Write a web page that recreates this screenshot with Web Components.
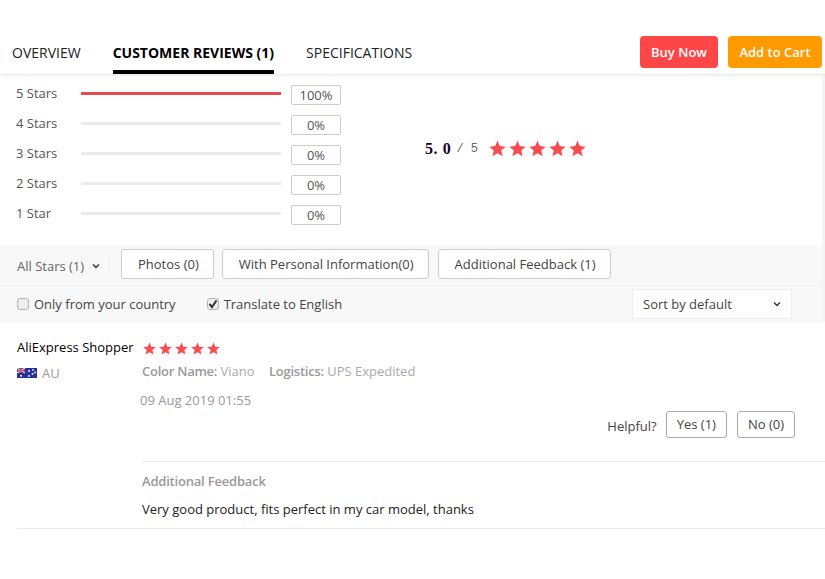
<!DOCTYPE html>
<html>
<head>
<meta charset="utf-8">
<style>
  html, body {
    margin: 0;
    background: #fff;
    font-family: "Open Sans", sans-serif;
    font-size: 13px;
    color: #333;
  }
</style>
</head>
<body>
<top-bar></top-bar>
<rating-summary></rating-summary>
<filter-bar></filter-bar>
<review-item
  name="AliExpress Shopper"
  country="AU"
  color="Viano"
  logistics="UPS Expedited"
  date="09 Aug 2019 01:55"
  yes="1"
  no="0">Very good product, fits perfect in my car model, thanks</review-item>

<script>
class StarRow extends HTMLElement {
  constructor() {
    super();
    this.shadowDOM = this.attachShadow({mode: 'open'});
  }

  connectedCallback() {
    const size = this.getAttribute('size') || 16;
    const gap = this.getAttribute('gap') || 4;
    const star = `<svg width="${size}" height="${size}" viewBox="0 0 24 24"><path fill="#f94c50" d="M12 1l3.3 7.6 8.2.8-6.2 5.4 1.9 8.1L12 18.7l-7.2 4.2 1.9-8.1L.5 9.4l8.2-.8z"/></svg>`;
    this.shadowDOM.innerHTML = `
      <style>
        :host {
          display: inline-flex;
          gap: ${gap}px;
        }
        svg {
          display: block;
        }
      </style>
      ${star.repeat(5)}
    `;
  }
}

class TopBar extends HTMLElement {
  constructor() {
    super();
    this.shadowDOM = this.attachShadow({mode: 'open'});
    this.shadowDOM.innerHTML = `
      <style>
        :host {
          display: flex;
          position: relative;
          z-index: 1;
          height: 74px;
          padding-left: 12px;
          padding-right: 3px;
          box-sizing: border-box;
          background: #fff;
          box-shadow: 0 1px 3px rgba(0, 0, 0, 0.12);
          font-size: 14px;
          color: #222;
        }
        .tab {
          height: 74px;
          box-sizing: border-box;
          padding-top: 43px;
          line-height: 20px;
          margin-right: 32px;
        }
        .active {
          font-weight: 700;
          color: #000;
          border-bottom: 4px solid #000;
        }
        .actions {
          margin-left: auto;
          display: flex;
          gap: 10px;
          padding-top: 36px;
        }
        .btn {
          height: 32px;
          line-height: 32px;
          box-sizing: border-box;
          text-align: center;
          border-radius: 4px;
          color: #fff;
          font-weight: 600;
          font-size: 13px;
        }
        .buy { background: #ff4747; width: 78px; }
        .cart { background: #ff9a00; width: 94px; }
      </style>
      <div class="tab">OVERVIEW</div>
      <div class="tab active">CUSTOMER REVIEWS (1)</div>
      <div class="tab">SPECIFICATIONS</div>
      <div class="actions">
        <div class="btn buy">Buy Now</div>
        <div class="btn cart">Add to Cart</div>
      </div>
    `;
  }
}

class RatingRow extends HTMLElement {
  constructor() {
    super();
    this.shadowDOM = this.attachShadow({mode: 'open'});
  }

  connectedCallback() {
    const value = this.getAttribute('value');
    this.shadowDOM.innerHTML = `
      <style>
        :host {
          display: flex;
          align-items: center;
          height: 30px;
          color: #555;
        }
        .label {
          width: 65px;
          position: relative;
          top: -2px;
        }
        .track {
          width: 200px;
          height: 3px;
          position: relative;
          top: -2px;
          background: #ebebeb;
        }
        .fill {
          height: 100%;
          width: ${value};
          background: #e8494c;
        }
        .pct {
          box-sizing: border-box;
          width: 50px;
          height: 20px;
          margin-left: 10px;
          text-align: center;
          border: 1px solid #ccc;
          border-radius: 2px;
          line-height: 19px;
        }
      </style>
      <div class="label"><slot></slot></div>
      <div class="track"><div class="fill"></div></div>
      <div class="pct">${value}</div>
    `;
  }
}

class RatingSummary extends HTMLElement {
  constructor() {
    super();
    this.shadowDOM = this.attachShadow({mode: 'open'});
    this.shadowDOM.innerHTML = `
      <style>
        :host {
          display: flex;
          height: 172px;
          box-sizing: border-box;
          padding: 6px 0 0 16px;
          border-right: 3px solid #f5f5f5;
        }
        .rows {
          width: 341px;
        }
        .score {
          display: flex;
          align-items: center;
          height: 137px;
          margin-left: 68px;
        }
        b {
          font-family: "Liberation Serif", serif;
          font-size: 16px;
          color: #14052a;
          letter-spacing: 0.6px;
          white-space: pre;
        }
        span {
          font-family: "Liberation Mono", monospace;
          font-size: 12px;
          color: #666;
          margin-left: 5px;
          margin-right: 11px;
        }
      </style>
      <div class="rows">
        <rating-row value="100%">5 Stars</rating-row>
        <rating-row value="0%">4 Stars</rating-row>
        <rating-row value="0%">3 Stars</rating-row>
        <rating-row value="0%">2 Stars</rating-row>
        <rating-row value="0%">1 Star</rating-row>
      </div>
      <div class="score">
        <b>5. 0</b><span>/ 5</span>
        <star-row size="17" gap="3"></star-row>
      </div>
    `;
  }
}

class FilterBar extends HTMLElement {
  constructor() {
    super();
    this.shadowDOM = this.attachShadow({mode: 'open'});
    this.shadowDOM.innerHTML = `
      <style>
        :host {
          display: block;
          background: #f8f8f8;
          color: #444;
          border-right: 3px solid #f5f5f5;
        }
        .line {
          display: flex;
          align-items: center;
        }
        .first {
          height: 37px;
          padding-left: 17px;
          box-sizing: border-box;
          padding-top: 3px;
          padding-bottom: 4px;
        }
        .second {
          height: 39px;
          padding-left: 17px;
          padding-top: 2px;
          border-top: 1px solid #fcfcfc;
          box-sizing: border-box;
        }
        .all {
          width: 93px;
          height: 30px;
          margin-right: 11px;
          display: flex;
          align-items: center;
          gap: 8px;
          padding-top: 4px;
          box-sizing: border-box;
          color: #666;
          border-right: 1px solid #eee;
        }
        .chip {
          box-sizing: border-box;
          height: 30px;
          line-height: 28px;
          padding: 0 14px 0 16px;
          margin-right: 9px;
          background: #fff;
          border: 1px solid #ccc;
          border-radius: 3px;
        }
        .check {
          display: flex;
          align-items: center;
          gap: 5px;
        }
        .box {
          box-sizing: border-box;
          width: 12px;
          height: 12px;
          background: #eee;
          border: 1px solid #b4b4b4;
          border-radius: 3px;
          display: flex;
          align-items: center;
          justify-content: center;
        }
        .sort {
          box-sizing: border-box;
          width: 160px;
          height: 30px;
          margin-left: auto;
          margin-right: 30px;
          padding: 0 10px 0 10px;
          display: flex;
          align-items: center;
          justify-content: space-between;
          background: #fff;
          border: 1px solid #eee;
        }
        svg {
          display: block;
        }
      </style>
      <div class="line first">
        <div class="all">All Stars (1)
          <svg width="8" height="6" viewBox="0 0 8 6"><path d="M1 1.5l3 3 3-3" fill="none" stroke="#333" stroke-width="1.4"/></svg>
        </div>
        <div class="chip" style="margin-right:8px">Photos (0)</div>
        <div class="chip">With Personal Information(0)</div>
        <div class="chip">Additional Feedback (1)</div>
      </div>
      <div class="line second">
        <div class="check" style="margin-right:31px"><span class="box"></span>Only from your country</div>
        <div class="check"><span class="box"><svg width="10" height="10" viewBox="0 0 10 10"><path d="M1.5 5l2.5 3 4.5-6.5" fill="none" stroke="#333" stroke-width="2"/></svg></span>Translate to English</div>
        <div class="sort">Sort by default
          <svg width="8" height="6" viewBox="0 0 8 6"><path d="M1 1.5l3 3 3-3" fill="none" stroke="#333" stroke-width="1.4"/></svg>
        </div>
      </div>
    `;
  }
}

class ReviewItem extends HTMLElement {
  constructor() {
    super();
    this.shadowDOM = this.attachShadow({mode: 'open'});
  }

  connectedCallback() {
    const attr = name => this.getAttribute(name);
    this.shadowDOM.innerHTML = `
      <style>
        :host {
          display: grid;
          grid-template-columns: 125px 1fr;
          margin-left: 17px;
          height: 207px;
          box-sizing: border-box;
          border-bottom: 1px solid #e8e8e8;
        }
        .user {
          padding-top: 15px;
        }
        .name {
          line-height: 20px;
          color: #000;
          white-space: nowrap;
        }
        .place {
          display: flex;
          align-items: center;
          gap: 5px;
          margin-top: 7px;
          line-height: 18px;
          color: #999;
        }
        .main {
          padding-top: 18px;
        }
        .rate {
          height: 16px;
          margin-left: 1px;
          display: flex;
          align-items: center;
        }
        .meta {
          margin-top: 6px;
          line-height: 18px;
          color: #aaa;
        }
        .meta b {
          color: #999;
          font-weight: 600;
          letter-spacing: -0.25px;
        }
        .meta span + b {
          margin-left: 11px;
        }
        .date {
          margin: 11px 0 0 -2px;
          line-height: 18px;
          color: #999;
        }
        .helpful {
          display: flex;
          justify-content: flex-end;
          align-items: center;
          gap: 9px;
          margin-right: 30px;
          margin-top: 2px;
          color: #444;
        }
        .ask {
          position: relative;
          top: 1px;
        }
        .vote {
          box-sizing: border-box;
          height: 27px;
          line-height: 25px;
          padding: 0 10px;
          border: 1px solid #aaa;
          border-radius: 3px;
        }
        .vote + .vote {
          margin-left: 1px;
        }
        .extra {
          margin-top: 23px;
          border-top: 1px solid #e8e8e8;
          padding-top: 10px;
        }
        .extra b {
          display: block;
          line-height: 18px;
          color: #999;
          font-weight: 600;
          letter-spacing: -0.2px;
        }
        .text {
          margin-top: 10px;
          line-height: 18px;
          color: #222;
        }
      </style>
      <div class="user">
        <div class="name">${attr('name')}</div>
        <div class="place">
          <svg width="20" height="10" viewBox="0 0 20 10">
            <rect width="20" height="10" fill="#28309c"/>
            <path d="M0 0l8 5M8 0l-8 5" stroke="#e8e8f2" stroke-width="1.2"/>
            <path d="M4 0v5M0 2.5h8" stroke="#d9485a" stroke-width="1.4"/>
            <circle cx="4" cy="7.8" r="1" fill="#fff"/>
            <circle cx="12" cy="3" r=".9" fill="#fff"/>
            <circle cx="16" cy="1.8" r=".9" fill="#fff"/>
            <circle cx="18" cy="4.4" r=".9" fill="#fff"/>
            <circle cx="15.5" cy="6" r=".9" fill="#fff"/>
            <circle cx="12" cy="8" r=".9" fill="#fff"/>
          </svg>
          ${attr('country')}
        </div>
      </div>
      <div class="main">
        <div class="rate"><star-row size="13" gap="3"></star-row></div>
        <div class="meta"><b>Color Name:</b> <span>${attr('color')}</span> <b>Logistics:</b> ${attr('logistics')}</div>
        <div class="date">${attr('date')}</div>
        <div class="helpful">
          <span class="ask">Helpful?</span>
          <span class="vote">Yes (${attr('yes')})</span>
          <span class="vote">No (${attr('no')})</span>
        </div>
        <div class="extra">
          <b>Additional Feedback</b>
          <div class="text"><slot></slot></div>
        </div>
      </div>
    `;
  }
}

customElements.define('star-row', StarRow);
customElements.define('top-bar', TopBar);
customElements.define('rating-row', RatingRow);
customElements.define('rating-summary', RatingSummary);
customElements.define('filter-bar', FilterBar);
customElements.define('review-item', ReviewItem);
</script>
</body>
</html>
